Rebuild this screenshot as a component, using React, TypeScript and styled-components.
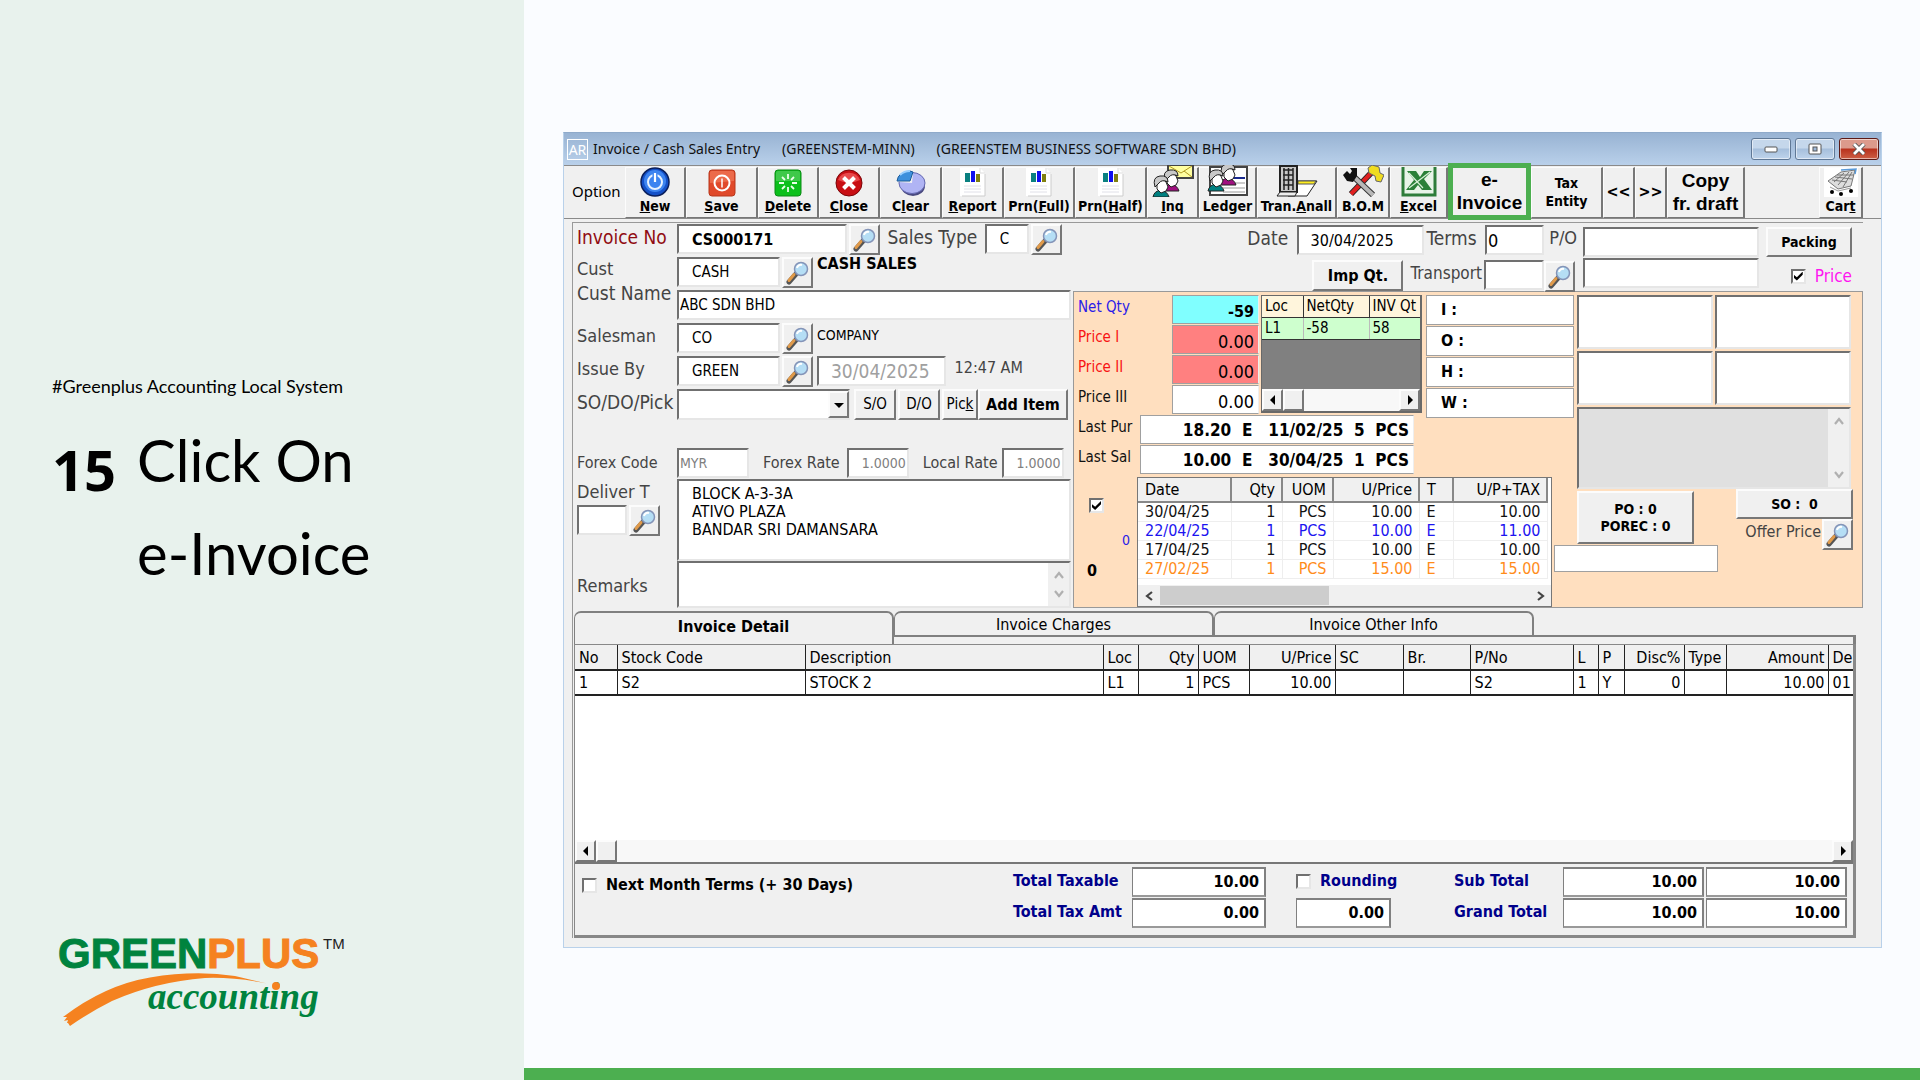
import React from "react";
import styled, { createGlobalStyle, css } from "styled-components";

const ui = `"DejaVu Sans Condensed", "DejaVu Sans", "Noto Sans", sans-serif`;

const GlobalStyle = createGlobalStyle`
  *, *::before, *::after { box-sizing: border-box; }
  body { margin: 0; background: #fafcff; font-family: ${ui}; font-size: 16px; color: #000; }
  input, button, select, textarea { font-family: inherit; color: inherit; margin: 0; border-radius: 0; }
`;

/* ---------- shared pieces ---------- */
const sunken = css`
  border: 2px solid;
  border-color: #707070 #e6e6e6 #e6e6e6 #707070;
`;
const raised = css`
  background: #f0f0f0;
  border: 2px solid;
  border-color: #fcfcfc #777 #777 #fcfcfc;
`;

const Page = styled.div`
  display: flex;
  min-height: 100vh;
`;

const Side = styled.aside`
  flex: 0 0 524px;
  background: #e8f2ed;
  display: flex;
  flex-direction: column;
  padding: 372px 30px 40px 52px;
`;
const Tag = styled.p`
  margin: 0;
  font: 18px/28px Lato, sans-serif;
`;
const Step = styled.div`
  display: flex;
  align-items: flex-start;
  gap: 21px;
  margin-top: 13px;
`;
const StepNo = styled.span`
  font: bold 56px/112px "Open Sans", sans-serif;
`;
const StepTitle = styled.h1`
  margin: 0;
  font: 400 58px/93px Lato, sans-serif;
`;
const LogoBox = styled.div`
  margin: auto 0 0 -22px;
  line-height: 0;
`;

const Main = styled.main`
  flex: 1;
  min-width: 0;
  border-bottom: 12px solid #4caf50;
  padding: 132px 38px 60px 39px;
`;

const Window = styled.section`
  background: #f0f0f0;
  border: 1px solid #b9d1ea;
  border-top: 1px solid #8faaca;
  padding-bottom: 9px;
`;
const TitleBar = styled.header`
  display: flex;
  align-items: center;
  height: 32px;
  padding: 0 2px 0 3px;
  background: linear-gradient(#98b3d3, #b9d0ea);
  font: 14px/30px "Noto Sans", sans-serif;
  color: #111;
  white-space: pre;
`;
const AppBadge = styled.span`
  width: 21px;
  height: 21px;
  margin-right: 5px;
  border: 1px solid #fff;
  color: #fff;
  line-height: 19px;
  text-align: center;
`;
const WinButtons = styled.div`
  display: flex;
  gap: 4px;
  margin-left: auto;
`;
const WinButton = styled.button<{ $danger?: boolean }>`
  width: 40px;
  height: 22px;
  padding: 0;
  display: grid;
  place-items: center;
  border: 1px solid ${p => (p.$danger ? "#5c1a16" : "#5f7896")};
  border-radius: 3px;
  box-shadow: inset 0 0 0 1px #ffffff88;
  background: ${p => (p.$danger ? "linear-gradient(#dc9a8c 45%, #b8311d 50%, #cd5f45)" : "linear-gradient(#c5d7eb 45%, #a6bfdc 50%, #bfd4ec)")};
`;

const Toolbar = styled.nav`
  display: flex;
  height: 54px;
  padding: 1px 0 0 2px;
  border-top: 1px solid #8a8a8a;
  border-bottom: 1px solid #8a8a8a;
`;
const OptionLabel = styled.span`
  width: 59px;
  padding-left: 6px;
  font: 15px/48px "Noto Sans", sans-serif;
`;
const Tool = styled.button<{ $w: number }>`
  ${raised}
  width: ${p => p.$w}px;
  padding: 0 0 2px;
  border-width: 1px 2px 1px 1px;
  display: flex;
  flex-direction: column;
  align-items: center;
  justify-content: flex-end;
  font-weight: bold;
  font-size: 14px;
  line-height: 18px;
  white-space: nowrap;
  svg { display: block; flex: none; }
`;
const TextTool = styled(Tool)<{ $big?: boolean }>`
  justify-content: center;
  white-space: pre;
  ${p => p.$big && css`
    font-family: "Liberation Sans", sans-serif;
    font-size: 19px;
    line-height: 23px;
  `}
`;
const StepTool = styled(TextTool)`
  font-size: 16px;
`;
const MarkedTool = styled(TextTool)`
  border: 5px solid #4caf50;
  margin: -4px 0 -2px;
`;
const Spacer = styled.span<{ $w?: number }>`
  flex: ${p => (p.$w ? `0 0 ${p.$w}px` : "1")};
`;

const Body = styled.div`
  margin: 3px 18px 0 8px;
  border-left: 1px solid #999;
`;
const Upper = styled.div`
  display: flex;
  border-top: 1px solid #999;
`;

/* ---------- left form ---------- */
const Form = styled.div`
  flex: 0 0 500px;
  display: grid;
  grid-template-columns: 100px 1fr;
  grid-template-rows: 33px 33px 33px 33px 33px 59px 31px 82px 47px;
  padding: 1px 0 0 4px;
`;
const Label = styled.label<{ $color?: string; $size?: number; $lh?: number }>`
  display: block;
  color: ${p => p.$color ?? "#444"};
  font-size: ${p => p.$size ?? 18}px;
  line-height: ${p => p.$lh ?? 26}px;
  white-space: nowrap;
`;
const LabelPair = styled.div`
  grid-row: span 2;
  ${Label} { line-height: 24px; }
`;
const LowLabel = styled.div`
  padding-top: 12px;
`;
const Line = styled.div<{ $gap?: number }>`
  display: flex;
  align-items: flex-start;
  gap: ${p => p.$gap ?? 2}px;
`;
const Field = styled.input<{ $w?: number; $size?: number; $pad?: number; $bold?: boolean; $right?: boolean; $color?: string }>`
  ${sunken}
  width: ${p => (p.$w ? p.$w + "px" : "100%")};
  height: 30px;
  padding: 0 ${p => p.$pad ?? 1}px;
  background: #fff;
  color: ${p => p.$color ?? "#000"};
  font-size: ${p => p.$size ?? 16}px;
  font-weight: ${p => (p.$bold ? "bold" : "normal")};
  text-align: ${p => (p.$right ? "right" : "left")};
`;
const Area = styled.textarea`
  ${sunken}
  display: block;
  width: 394px;
  height: 100%;
  padding: 4px 13px;
  resize: none;
  font-size: 16px;
  line-height: 18px;
`;
const ScrollArea = styled.div<{ $bg?: string; $w?: number; $h?: number }>`
  ${sunken}
  display: flex;
  width: ${p => (p.$w ? p.$w + "px" : "auto")};
  height: ${p => (p.$h ? p.$h + "px" : "auto")};
  background: ${p => p.$bg ?? "#fff"};
  textarea {
    flex: 1;
    min-width: 0;
    border: 0;
    background: transparent;
    resize: none;
  }
`;
const ScrollRail = styled.div`
  width: 21px;
  display: flex;
  flex-direction: column;
  justify-content: space-between;
  align-items: center;
  padding: 7px 0;
  background: #f0f0f0;
`;
const Lookup = styled.button`
  ${raised}
  flex: none;
  width: 31px;
  height: 31px;
  padding: 0;
  svg { display: block; margin: 1px 0 0 2px; }
`;
const Info = styled.span<{ $bold?: boolean; $size?: number; $color?: string }>`
  padding-left: 2px;
  font-weight: ${p => (p.$bold ? "bold" : "normal")};
  font-size: ${p => p.$size ?? 15}px;
  line-height: ${p => (p.$bold ? 14 : 24)}px;
  color: ${p => p.$color ?? "#000"};
`;
const Combo = styled.div`
  position: relative;
  width: 173px;
  select {
    ${sunken}
    width: 100%;
    height: 31px;
    appearance: none;
    background: #fff;
  }
  span {
    ${raised}
    position: absolute;
    top: 2px;
    right: 1px;
    width: 21px;
    height: 27px;
    display: grid;
    place-items: center;
    pointer-events: none;
  }
`;
const Push = styled.button<{ $w: number; $bold?: boolean; $h?: number; $size?: number }>`
  ${raised}
  width: ${p => p.$w}px;
  height: ${p => p.$h ?? 31}px;
  padding: 0;
  font-size: ${p => p.$size ?? 15}px;
  font-weight: ${p => (p.$bold ? "bold" : "normal")};
  line-height: 17px;
  white-space: pre;
`;

/* ---------- right header ---------- */
const Right = styled.div`
  flex: 1;
  min-width: 0;
`;
const Head = styled.div`
  display: flex;
  justify-content: flex-end;
  height: 68px;
  padding-right: 11px;
`;
const HeadCol = styled.div<{ $gap?: number; $top?: number; $start?: boolean; $w?: number }>`
  display: flex;
  flex-direction: column;
  align-items: ${p => (p.$start ? "flex-start" : "flex-end")};
  width: ${p => (p.$w ? p.$w + "px" : "auto")};
  gap: ${p => p.$gap ?? 2}px;
  padding-top: ${p => p.$top ?? 2}px;
`;
const Check = styled.input.attrs({ type: "checkbox" })`
  ${sunken}
  appearance: none;
  flex: none;
  width: 15px;
  height: 15px;
  background: #fff;
  display: grid;
  place-items: center;
  &:checked::before {
    content: "";
    width: 9px;
    height: 9px;
    background: #000;
    clip-path: polygon(0 35%, 35% 65%, 100% 0, 100% 35%, 35% 100%, 0 70%);
  }
`;
const CheckLabel = styled.label<{ $color?: string; $gap?: number; $bold?: boolean; $size?: number }>`
  display: flex;
  align-items: center;
  gap: ${p => p.$gap ?? 9}px;
  color: ${p => p.$color ?? "#000"};
  font-weight: ${p => (p.$bold ? "bold" : "normal")};
  font-size: ${p => p.$size ?? 16}px;
  line-height: 24px;
  white-space: nowrap;
`;

/* ---------- stock panel ---------- */
const Stock = styled.div`
  display: grid;
  grid-template-columns: 348px 132px 21px 1fr;
  grid-template-rows: 122px 60px 68px 62px;
  background: #ffdfbf;
  border: 1px solid #999;
  height: 317px;
  padding-top: 3px;
`;
const Prices = styled.div`
  grid-area: 1 / 1 / 3 / 2;
  display: grid;
  grid-template-columns: 181px 163px;
  grid-template-rows: 120px 60px;
  padding-left: 4px;
`;
const PriceRow = styled.div`
  display: flex;
  justify-content: space-between;
  height: 30px;
  ${Label} { line-height: 24px; font-size: 15px; }
`;
const Amount = styled.input<{ $w?: number; $bg?: string; $bold?: boolean; $size?: number }>`
  width: ${p => p.$w ?? 87}px;
  height: 29px;
  padding: 3px 4px 0;
  border: 1px solid #a0a0a0;
  border-right-color: #eee;
  background: ${p => p.$bg ?? "#fff"};
  font-size: ${p => p.$size ?? 18}px;
  font-weight: ${p => (p.$bold ? "bold" : "normal")};
  text-align: right;
`;
const LastRow = styled(PriceRow)`
  width: 336px;
  ${Amount} { padding-top: 0; }
`;
const LocGrid = styled.div`
  display: flex;
  flex-direction: column;
  margin: 0 0 0 2px;
  height: 118px;
  border: 2px solid #696969;
  border-width: 1px 2px 2px 1px;
  background: #808080;
  table {
    width: 100%;
    table-layout: fixed;
    border-collapse: collapse;
    font-size: 15px;
    line-height: 21px;
  }
  th, td {
    padding: 0 0 0 3px;
    border-right: 1px solid #333;
    border-bottom: 1px solid #333;
    font-weight: normal;
    text-align: left;
    white-space: nowrap;
  }
  th { background: #fff5dc; }
  td { background: #ceffce; border-right-color: #bbb; }
  th:last-child, td:last-child { border-right: 0; }
`;
const OldScroll = styled.div`
  display: flex;
  height: 22px;
  margin-top: auto;
  background: #f8f8f8;
`;
const ScrollKey = styled.button`
  ${raised}
  width: 21px;
  padding: 0;
  display: grid;
  place-items: center;
`;
const Dims = styled.div`
  grid-area: 1 / 2 / 2 / 4;
  margin: 0 1px 0 4px;
  display: flex;
  flex-direction: column;
  gap: 1px;
`;
const Dim = styled.label`
  flex: none;
  display: flex;
  height: 30px;
  padding-left: 14px;
  border: 1px solid #a0a0a0;
  background: #fff;
  font-weight: bold;
  font-size: 16px;
  line-height: 28px;
  input { flex: 1; min-width: 0; border: 0; }
`;
const Flags = styled.div`
  grid-area: 3 / 1 / 5 / 2;
  width: 64px;
  padding: 21px 0 0 15px;
  display: flex;
  flex-direction: column;
  output { line-height: 20px; }
`;
const SmallZero = styled.output`
  margin: 17px 8px 0 0;
  align-self: flex-end;
  font-size: 14px;
  color: #2b1ce8;
`;
const BoldZero = styled.output`
  margin-top: 11px;
  margin-left: -2px;
  font-weight: bold;
  font-size: 16px;
`;
const History = styled.div`
  grid-area: 3 / 1 / 5 / 3;
  margin: 0 2px 0 63px;
  height: 130px;
  border: 1px solid #777;
  background: #fff;
  display: flex;
  flex-direction: column;
  table {
    width: 100%;
    table-layout: fixed;
    border-collapse: collapse;
    line-height: 18px;
  }
  th {
    height: 24px;
    background: #f0f0f0;
    border-right: 2px solid #888;
    border-bottom: 2px solid #888;
    font-weight: normal;
  }
  td { border: 1px solid #eee; border-left: 0; border-top: 0; }
  th, td { padding: 0 6px 0 7px; text-align: right; white-space: nowrap; }
  th:first-child, td:first-child, th:nth-child(5), td:nth-child(5) { text-align: left; }
`;
const FlatScroll = styled.div`
  display: flex;
  align-items: center;
  gap: 6px;
  height: 21px;
  margin-top: auto;
  padding: 0 5px 0 6px;
  background: #f0f0f0;
  i { width: 169px; height: 19px; background: #cdcdcd; }
  svg:last-child { margin-left: auto; }
`;
const Notes = styled.div`
  grid-area: 1 / 4 / 5 / 5;
  margin: 0 11px 0 2px;
  display: grid;
  grid-template-columns: 1fr 1fr;
  grid-template-rows: 54px 54px 82px 66px;
  gap: 2px;
  height: 262px;
  > ${ScrollArea} { grid-column: 1 / 3; }
`;
const NoteBox = styled.textarea`
  ${sunken}
  width: 100%;
  height: 100%;
  resize: none;
`;
const Orders = styled.div`
  grid-column: 1 / 3;
  display: flex;
  justify-content: space-between;
  align-items: flex-start;
`;
const Offer = styled.div`
  display: flex;
  flex-direction: column;
  align-items: flex-end;
  margin: -2px -2px 0 0;
`;
const Extra = styled.div`
  grid-area: 4 / 3 / 5 / 5;
  input {
    width: 164px;
    height: 27px;
    border: 1px solid #a0a0a0;
    background: #fff;
  }
`;

/* ---------- detail ---------- */
const Tabs = styled.div`
  display: flex;
  height: 33px;
  margin: 3px 0 0 1px;
`;
const Tab = styled.button<{ $on?: boolean }>`
  flex: 0 0 320px;
  height: ${p => (p.$on ? 33 : 26)}px;
  padding: 0 0 ${p => (p.$on ? 5 : 0)}px;
  border: 2px solid #808080;
  border-bottom-width: ${p => (p.$on ? 0 : 2)}px;
  border-left-width: 1px;
  border-radius: 7px 7px 0 0;
  background: #f0f0f0;
  font-size: 16px;
  font-weight: ${p => (p.$on ? "bold" : "normal")};
`;
const TabRest = styled.span`
  flex: 1;
  margin: 24px 7px 0 0;
  border-top: 2px solid #808080;
  border-right: 3px solid #808080;
`;
const Sheet = styled.div`
  margin: 0 7px 0 1px;
  border: 3px solid #888;
  border-width: 1px 3px 3px 1px;
`;
const GridBox = styled.div`
  display: flex;
  flex-direction: column;
  height: 219px;
  background: #fff;
  border-bottom: 2px solid #777;
`;
const Detail = styled.table`
  width: 100%;
  table-layout: fixed;
  border-collapse: collapse;
  th, td {
    height: 25px;
    padding: 1px 3px 0 4px;
    border-right: 1px solid #222;
    border-bottom: 2px solid #222;
    font-weight: normal;
    text-align: left;
    line-height: 22px;
    white-space: nowrap;
  }
  th { background: #f0f0f0; }
  th:last-child, td:last-child { border-right: 0; padding-right: 0; }
`;
const Num = styled.td`
  && { text-align: right; }
`;
const Totals = styled.div`
  display: grid;
  grid-template-columns: 1fr 119px 134px 30px 95px 63px 109px 141px 2px 141px 6px;
  grid-template-rows: 31px 31px;
  height: 71px;
  padding-top: 3px;
  align-items: start;
`;
const TotalLabel = styled.label`
  color: #00008b;
  font-weight: bold;
  font-size: 16px;
  line-height: 28px;
`;
const Total = styled.input`
  display: block;
  width: 100%;
  height: 30px;
  padding: 0 5px 1px;
  border: 2px solid #808080;
  border-left-width: 1px;
  border-bottom-color: #999;
  background: #fff;
  font-weight: bold;
  font-size: 16px;
  text-align: right;
`;
const Cell = styled.div<{ $c: string; $pad?: string }>`
  grid-area: ${p => p.$c};
  padding: ${p => p.$pad ?? "0"};
`;

/* ---------- drawings ---------- */
const Glass = () => (
  <svg width="24" height="24" viewBox="0 0 24 24">
    <path d="M3 21 10 13" stroke="#555" strokeWidth="5" strokeLinecap="round" />
    <path d="M3 19.500 8 13.500" stroke="#e09a4a" strokeWidth="3" strokeLinecap="round" />
    <circle cx="15" cy="8" r="6.500" fill="#b5def5" stroke="#8494b8" strokeWidth="1.500" />
    <path d="M11 7a4 4 0 0 1 5-3" stroke="#fff" strokeWidth="2" fill="none" />
  </svg>
);
const Arrow = ({ dir }: { dir: "left" | "right" | "down" }) => (
  <svg width="10" height="10" viewBox="0 0 10 10">
    <path d={dir === "left" ? "M7 0v10L2 5z" : dir === "right" ? "M3 0v10l5-5z" : "M0 3h10L5 8z"} />
  </svg>
);
const Chevron = ({ dir, color = "#b0b0b0" }: { dir: "up" | "down" | "left" | "right"; color?: string }) => {
  const d = { up: "M1 8l4-5 4 5", down: "M1 2l4 5 4-5", left: "M8 1L3 5l5 4", right: "M2 1l5 4-5 4" }[dir];
  return (
    <svg width="10" height="10" viewBox="0 0 10 10">
      <path d={d} fill="none" stroke={color} strokeWidth="2.200" />
    </svg>
  );
};

const PowerIcon = () => (
  <svg width="30" height="30" viewBox="0 0 30 30">
    <circle cx="15" cy="15" r="14" fill="#1450c8" stroke="#0a1f5c" strokeWidth="1.500" />
    <circle cx="15" cy="14" r="11" fill="#3d84f0" />
    <circle cx="15" cy="15" r="7" fill="none" stroke="#e8f2ff" strokeWidth="2" />
    <path d="M15 6v9" stroke="#3d84f0" strokeWidth="5" />
    <path d="M15 6v9" stroke="#fff" strokeWidth="2.200" />
  </svg>
);
const SaveIcon = () => (
  <svg width="28" height="28" viewBox="0 0 28 28">
    <rect x="1" y="1" width="26" height="26" rx="3" fill="#e0492a" stroke="#b8381c" />
    <path d="M2 14V4q0-2 2-2h20q2 0 2 2v8z" fill="#ec6a4a" />
    <circle cx="14" cy="14" r="7.500" fill="none" stroke="#fff" strokeWidth="2" />
    <path d="M14 9.500v9" stroke="#fff" strokeWidth="1.500" />
  </svg>
);
const DeleteIcon = () => (
  <svg width="28" height="28" viewBox="0 0 28 28">
    <rect x="1" y="1" width="26" height="26" rx="3" fill="#0cc01c" stroke="#0a8a14" />
    <path d="M2 12V4q0-2 2-2h20q2 0 2 2v8z" fill="#3fc94a" />
    <path d="M14 5v5M14 18v5M5 14h5M18 14h5M8 8l3 3M17 17l3 3M20 8l-3 3M11 17l-3 3" stroke="#eaffea" strokeWidth="1.800" />
  </svg>
);
const CloseIcon = () => (
  <svg width="28" height="28" viewBox="0 0 28 28">
    <circle cx="14" cy="14" r="13" fill="#c80f14" stroke="#7a0508" />
    <path d="M3 11a12 12 0 0 1 22 0q-11 5-22 0z" fill="#e8484a" />
    <path d="M8.500 8.500l11 11M19.500 8.500l-11 11" stroke="#fff" strokeWidth="4" />
  </svg>
);
const ClearIcon = () => (
  <svg width="32" height="28" viewBox="0 0 32 28">
    <ellipse cx="18" cy="17" rx="12" ry="10" fill="#4a4a80" />
    <ellipse cx="17" cy="14" rx="13" ry="10.500" fill="#b0b4f4" stroke="#6468b0" />
    <path d="M17 14 4 13q2-6 8-9h6z" fill="#f0f0f0" />
    <path d="M2 12Q3 3 15 2l3 1-3 9z" fill="#3e90dc" stroke="#1a5a98" />
    <path d="M5 6q4-4 10-4" stroke="#9cd0ff" strokeWidth="2" fill="none" />
  </svg>
);
const ReportIcon = () => (
  <svg width="26" height="29" viewBox="0 0 26 29">
    <path d="M0 0h20l5 5v23H0z" fill="#fff" />
    <path d="M20 0v5h5" fill="none" stroke="#ddd" />
    <path d="M25 6v22H2" fill="none" stroke="#ccc" />
    <path d="M5 5h5v9H5z" fill="#0a8080" />
    <path d="M11 3h4v11h-4z" fill="#1010f0" />
    <path d="M16 6h4v8h-4z" fill="#808010" />
    <path d="M4 18h17M4 21h17M4 24h17" stroke="#e0e0e8" />
  </svg>
);
const Face = ({ x, y, coat }: { x: number; y: number; coat: string }) => (
  <g transform={`translate(${x} ${y})`} stroke="#222">
    <path d="M0 22q1-6 8-7 6 1 8 7z" fill={coat} />
    <path d="M4 6q5-4 9 1l2 5-2 4-5 2-4-4z" fill="#fff" />
    <path d="M2 12Q-1 2 7 1q8-1 8 6-6-3-9 1z" fill="#c8c8c8" />
  </g>
);
const InquiryIcon = () => (
  <svg width="42" height="32" viewBox="0 0 42 32">
    <path d="M16 0h25v13H16z" fill="#ffffa0" stroke="#444" strokeWidth="2" />
    <path d="M17 1l12 7 11-7M17 12l8-6M40 12l-8-6" stroke="#b09820" fill="none" />
    <Face x={11} y={4} coat="#a01080" />
    <Face x={1} y={10} coat="#008080" />
  </svg>
);
const LedgerIcon = () => (
  <svg width="42" height="32" viewBox="0 0 42 32">
    <path d="M3 2h37v28H3z" fill="#fff" stroke="#444" strokeWidth="2" />
    <path d="M20 13h18" stroke="#1a2a90" strokeWidth="2" />
    <path d="M20 18h18M16 23h22M16 27h22" stroke="#999" />
    <Face x={13} y={-2} coat="#a01080" />
    <Face x={1} y={4} coat="#008080" />
  </svg>
);
const BuildingIcon = () => (
  <svg width="42" height="32" viewBox="0 0 42 32">
    <path d="M18 16h23L31 31H12z" fill="#fff" stroke="#222" />
    <path d="M22 16h18l-2 3H22z" fill="#ffee20" stroke="#555" />
    <path d="M4 1h17v26H4z" fill="#c8c8c8" stroke="#222" strokeWidth="2" />
    <path d="M7 5h10M7 10h10M7 15h10M7 20h10M8 3v22M12.500 3v22M17 3v22" stroke="#222" strokeWidth="1.500" />
    <path d="M4 27h17l-2 4H1z" fill="#eee" stroke="#222" />
  </svg>
);
const ToolsIcon = () => (
  <svg width="42" height="32" viewBox="0 0 42 32">
    <path d="M9 29 30 7" stroke="#222" strokeWidth="6" />
    <path d="M9 29 30 7" stroke="#e02020" strokeWidth="4" />
    <path d="M11 11 31 30" stroke="#333" strokeWidth="6" />
    <path d="M11 11 31 30" stroke="#b8b8b8" strokeWidth="4" />
    <path d="M1 10 5 6l3 3 2-3-2-3h7v8l-4 6-6-1z" fill="#111" />
    <path d="M26 3l4-3 7 2 1 6 4 2-3 7-5-1-1-5-6-3z" fill="#f0dc20" stroke="#666" />
  </svg>
);
const ExcelIcon = () => (
  <svg width="38" height="30" viewBox="0 0 38 30">
    <path d="M2 0h34v28H2z" fill="#e8f4e8" />
    <path d="M3 0v28h32V0" fill="none" stroke="#2e7d3a" strokeWidth="3" />
    <path d="M7 4h9l4 6 4-6h8l-8 8 8 11H22l-4-5-4 5H6l8-10z" fill="#2a8038" />
    <path d="M9 6l14 15M30 5 9 21" stroke="#d8f0d8" strokeWidth="1.200" />
  </svg>
);
const CartIcon = () => (
  <svg width="34" height="29" viewBox="0 0 34 29">
    <path d="M0 0h34v29H0z" fill="#fff" />
    <path d="M17 4 31 2l-4 16-13 3L4 13z" fill="#ddd" stroke="#777" />
    <path d="M8 12l15 2M11 9l17 2M13 7l17 0M10 14l10-9M14 17 25 4M19 19l9-15" stroke="#777" fill="none" />
    <path d="M17 2 32 1l-1 5" stroke="#5a9ad8" strokeWidth="1.500" fill="none" />
    <path d="M6 19l8 4 13-3" stroke="#999" fill="none" />
    <circle cx="8" cy="24" r="2" /><circle cx="17" cy="26" r="2" /><circle cx="27" cy="23" r="2" />
  </svg>
);

const Logo = () => (
  <svg width="340" height="130" viewBox="0 0 340 130" role="img" aria-label="Greenplus accounting">
    <text x="28" y="58" fontFamily="Liberation Sans, Arial, sans-serif" fontWeight="bold" fontSize="42" fill="#00833e" stroke="#00833e">
      GREEN<tspan fill="#f58220" stroke="#f58220">PLUS</tspan>
    </text>
    <text x="293" y="39" fontFamily="Liberation Sans, Arial, sans-serif" fontSize="15" fill="#222">TM</text>
    <path
      d="M33 107 Q75 75 120 67.500 Q165 60 205 66 L237 73.500 Q205 67 175 68 Q125 72 82 91 Q60 102 40 116 L38 113 37 113 38 110 34 111 37 107z"
      fill="#f58220"
    />
    <text x="118" y="99" fontFamily="Liberation Serif, Times New Roman, serif" fontWeight="bold" fontStyle="italic" fontSize="37" fill="#00833e">
      accounting
    </text>
    <circle cx="246" cy="76" r="4" fill="#f58220" />
  </svg>
);

/* ---------- data ---------- */
const history = [
  { date: "30/04/25", price: "10.00", tax: "10.00", color: "#111" },
  { date: "22/04/25", price: "10.00", tax: "11.00", color: "#1c14f0" },
  { date: "17/04/25", price: "10.00", tax: "10.00", color: "#111" },
  { date: "27/02/25", price: "15.00", tax: "15.00", color: "#ff8c1a" },
];

const columns: { title: string; w?: number; value: string; num?: boolean }[] = [
  { title: "No", w: 42, value: "1" },
  { title: "Stock Code", w: 188, value: "S2" },
  { title: "Description", value: "STOCK 2" },
  { title: "Loc", w: 35, value: "L1" },
  { title: "Qty", w: 60, value: "1", num: true },
  { title: "UOM", w: 51, value: "PCS" },
  { title: "U/Price", w: 86, value: "10.00", num: true },
  { title: "SC", w: 68, value: "" },
  { title: "Br.", w: 67, value: "" },
  { title: "P/No", w: 103, value: "S2" },
  { title: "L", w: 25, value: "1" },
  { title: "P", w: 26, value: "Y" },
  { title: "Disc%", w: 60, value: "0", num: true },
  { title: "Type", w: 42, value: "" },
  { title: "Amount", w: 102, value: "10.00", num: true },
  { title: "De", w: 25, value: "01" },
];

const Search = ({ name }: { name: string }) => (
  <Lookup aria-label={name}><Glass /></Lookup>
);

export default function App() {
  return (
    <Page>
      <GlobalStyle />
      <Side>
        <Tag>#Greenplus Accounting Local System</Tag>
        <Step>
          <StepNo>15</StepNo>
          <StepTitle>Click On<br />e-Invoice</StepTitle>
        </Step>
        <LogoBox><Logo /></LogoBox>
      </Side>

      <Main>
        <Window>
          <TitleBar>
            <AppBadge>AR</AppBadge>
            {"Invoice / Cash Sales Entry      (GREENSTEM-MINN)      (GREENSTEM BUSINESS SOFTWARE SDN BHD)"}
            <WinButtons>
              <WinButton aria-label="Minimize">
                <svg width="14" height="7" viewBox="0 0 14 7"><rect x="1" y="1" width="12" height="5" rx="1" fill="#fff" stroke="#555" /></svg>
              </WinButton>
              <WinButton aria-label="Maximize">
                <svg width="14" height="12" viewBox="0 0 14 12"><rect x="1" y="1" width="12" height="10" rx="1" fill="#fff" stroke="#555" /><rect x="5" y="4" width="4" height="4" fill="#9db8d8" stroke="#555" /></svg>
              </WinButton>
              <WinButton $danger aria-label="Close window">
                <svg width="14" height="12" viewBox="0 0 14 12"><path d="M2 1l10 10M12 1L2 11" stroke="#555" strokeWidth="4.500" /><path d="M2 1l10 10M12 1L2 11" stroke="#fff" strokeWidth="2.800" /></svg>
              </WinButton>
            </WinButtons>
          </TitleBar>

          <Toolbar>
            <OptionLabel>Option</OptionLabel>
            <Tool $w={61}><PowerIcon /><span><u>N</u>ew</span></Tool>
            <Tool $w={72}><SaveIcon /><span><u>S</u>ave</span></Tool>
            <Tool $w={61}><DeleteIcon /><span><u>D</u>elete</span></Tool>
            <Tool $w={61}><CloseIcon /><span><u>C</u>lose</span></Tool>
            <Tool $w={62}><ClearIcon /><span>C<u>l</u>ear</span></Tool>
            <Tool $w={62}><ReportIcon /><span><u>R</u>eport</span></Tool>
            <Tool $w={71}><ReportIcon /><span>Prn(<u>F</u>ull)</span></Tool>
            <Tool $w={72}><ReportIcon /><span>Prn(<u>H</u>alf)</span></Tool>
            <Tool $w={52}><InquiryIcon /><span><u>I</u>nq</span></Tool>
            <Tool $w={58}><LedgerIcon /><span>Ledger</span></Tool>
            <Tool $w={80}><BuildingIcon /><span>Tran.<u>A</u>nall</span></Tool>
            <Tool $w={53}><ToolsIcon /><span>B.O.M</span></Tool>
            <Tool $w={58}><ExcelIcon /><span><u>E</u>xcel</span></Tool>
            <MarkedTool $w={83} $big>{"e-\nInvoice"}</MarkedTool>
            <TextTool $w={72}>{"Tax\nEntity"}</TextTool>
            <StepTool $w={32}>{"<<"}</StepTool>
            <StepTool $w={32}>{">>"}</StepTool>
            <TextTool $w={78} $big>{"Copy\nfr. draft"}</TextTool>
            <Spacer />
            <Tool $w={44}><CartIcon /><span>Car<u>t</u></span></Tool>
            <Spacer $w={18} />
          </Toolbar>

          <Body>
            <Upper>
              <Form>
                <Label htmlFor="inv" $color="#900c12" $size={19}>Invoice No</Label>
                <Line>
                  <Field id="inv" $w={170} $pad={13} $bold defaultValue="CS000171" />
                  <Search name="Find invoice" />
                  <Label htmlFor="stype" $size={19}>&nbsp;Sales Type&nbsp;</Label>
                  <Field id="stype" $w={44} $pad={13} $size={15} defaultValue="C" />
                  <Search name="Find sales type" />
                </Line>

                <LabelPair>
                  <Label htmlFor="cust">Cust</Label>
                  <Label htmlFor="cname" $size={19}>Cust Name</Label>
                </LabelPair>
                <Line>
                  <Field id="cust" $w={103} $pad={13} $size={15} defaultValue="CASH" />
                  <Search name="Find customer" />
                  <Info $bold $size={16}>CASH SALES</Info>
                </Line>
                <Line><Field id="cname" $w={394} $size={15} defaultValue="ABC SDN BHD" /></Line>

                <Label htmlFor="sman">Salesman</Label>
                <Line>
                  <Field id="sman" $w={103} $pad={13} $size={15} defaultValue="CO" />
                  <Search name="Find salesman" />
                  <Info $size={14}>COMPANY</Info>
                </Line>

                <Label htmlFor="issue">Issue By</Label>
                <Line>
                  <Field id="issue" $w={103} $pad={13} $size={15} defaultValue="GREEN" />
                  <Search name="Find issuer" />
                  <span />
                  <Field aria-label="Issue date" $w={129} $size={19} $pad={12} $color="#a0a0a0" defaultValue="30/04/2025" />
                  <Info $size={16} $color="#444">&nbsp;12:47 AM</Info>
                </Line>

                <Label htmlFor="sodo" $size={19}>SO/DO/Pick</Label>
                <Line>
                  <Combo>
                    <select id="sodo"><option /></select>
                    <span><Arrow dir="down" /></span>
                  </Combo>
                  <span />
                  <Push $w={42}>S/O</Push>
                  <Push $w={42}>D/O</Push>
                  <Line $gap={0}>
                    <Push $w={36}>Pic<u>k</u></Push>
                    <Push $w={90} $bold $size={16}>Add Item</Push>
                  </Line>
                </Line>

                <Label htmlFor="fcode" $size={16} $lh={30}>Forex Code</Label>
                <Line $gap={14}>
                  <Field id="fcode" $w={72} $size={14} $color="#808080" defaultValue="MYR" />
                  <Line $gap={7}>
                    <Label htmlFor="frate" $size={16} $lh={30}>Forex Rate</Label>
                    <Field id="frate" $w={62} $size={14} $right $color="#808080" defaultValue="1.0000" />
                  </Line>
                  <Line $gap={4}>
                    <Label htmlFor="lrate" $size={16} $lh={30}>Local Rate</Label>
                    <Field id="lrate" $w={62} $size={14} $right $color="#808080" defaultValue="1.0000" />
                  </Line>
                </Line>

                <div>
                  <Label htmlFor="deliver">Deliver T</Label>
                  <Line>
                    <Field id="deliver" $w={50} />
                    <Search name="Find delivery address" />
                  </Line>
                </div>
                <Area aria-label="Delivery address" defaultValue={"BLOCK A-3-3A\nATIVO PLAZA\nBANDAR SRI DAMANSARA"} />

                <LowLabel><Label htmlFor="remarks">Remarks</Label></LowLabel>
                <Line>
                  <ScrollArea $w={394} $h={47}>
                    <textarea id="remarks" />
                    <ScrollRail><Chevron dir="up" /><Chevron dir="down" /></ScrollRail>
                  </ScrollArea>
                </Line>
              </Form>

              <Right>
                <Head>
                  <HeadCol $gap={5}>
                    <Line $gap={3}>
                      <Label htmlFor="date" $size={19}>Date&nbsp;</Label>
                      <Field id="date" $w={127} $pad={12} defaultValue="30/04/2025" />
                      <Label htmlFor="terms" $size={19}>Terms&nbsp;</Label>
                      <Field id="terms" $w={59} $size={18} defaultValue="0" />
                    </Line>
                    <Line>
                      <Push $w={91} $bold $size={16}>Imp Qt.</Push>
                      <Spacer $w={3} />
                      <Label htmlFor="transport" $size={17}>Transport</Label>
                      <Field id="transport" $w={60} />
                    </Line>
                  </HeadCol>
                  <HeadCol $gap={10} $start $w={39}>
                    <Label htmlFor="po">&nbsp;P/O</Label>
                    <Search name="Find transport" />
                  </HeadCol>
                  <HeadCol $gap={1} $top={4}>
                    <Field id="po" $w={176} />
                    <Field aria-label="P/O line 2" $w={176} />
                  </HeadCol>
                  <HeadCol $top={4} $gap={7} $w={93}>
                    <Push $w={86} $bold $size={14} $h={30}>Packing</Push>
                    <CheckLabel $color="#ff14f0" $size={17}><Check defaultChecked />Price</CheckLabel>
                  </HeadCol>
                </Head>

                <Stock>
                  <Prices>
                    <div>
                      <PriceRow><Label htmlFor="nq" $color="#2b1ce8">Net Qty</Label><Amount id="nq" $bg="#80ffff" $bold $size={16} defaultValue="-59" /></PriceRow>
                      <PriceRow><Label htmlFor="p1" $color="#f81414">Price I</Label><Amount id="p1" $bg="#ff8080" defaultValue="0.00" /></PriceRow>
                      <PriceRow><Label htmlFor="p2" $color="#f81414">Price II</Label><Amount id="p2" $bg="#ff8080" defaultValue="0.00" /></PriceRow>
                      <PriceRow><Label htmlFor="p3" $color="#111">Price III</Label><Amount id="p3" defaultValue="0.00" /></PriceRow>
                    </div>
                    <LocGrid>
                      <table>
                        <colgroup><col style={{ width: 41 }} /><col style={{ width: 66 }} /><col /></colgroup>
                        <thead><tr><th>Loc</th><th>NetQty</th><th>INV Qt</th></tr></thead>
                        <tbody><tr><td>L1</td><td>-58</td><td>58</td></tr></tbody>
                      </table>
                      <OldScroll>
                        <ScrollKey aria-label="Scroll left"><Arrow dir="left" /></ScrollKey>
                        <ScrollKey aria-label="Scroll thumb" />
                        <Spacer />
                        <ScrollKey aria-label="Scroll right"><Arrow dir="right" /></ScrollKey>
                      </OldScroll>
                    </LocGrid>
                    <div>
                      <LastRow><Label htmlFor="lp" $color="#111">Last Pur</Label><Amount id="lp" $w={274} $bold $size={17} defaultValue="18.20  E   11/02/25  5  PCS" /></LastRow>
                      <LastRow><Label htmlFor="ls" $color="#111">Last Sal</Label><Amount id="ls" $w={274} $bold $size={17} defaultValue="10.00  E   30/04/25  1  PCS" /></LastRow>
                    </div>
                  </Prices>

                  <Dims>
                    {["I", "O", "H", "W"].map(d => <Dim key={d}>{d} :<input /></Dim>)}
                  </Dims>

                  <Flags>
                    <Check defaultChecked aria-label="Show history" />
                    <SmallZero>0</SmallZero>
                    <BoldZero>0</BoldZero>
                  </Flags>

                  <History>
                    <table>
                      <colgroup>
                        {[93, 51, 51, 86, 34, 94].map((w, i) => <col key={i} style={{ width: w }} />)}
                        <col />
                      </colgroup>
                      <thead>
                        <tr><th>Date</th><th>Qty</th><th>UOM</th><th>U/Price</th><th>T</th><th>U/P+TAX</th></tr>
                      </thead>
                      <tbody>
                        {history.map(h => (
                          <tr key={h.date} style={{ color: h.color }}>
                            <td>{h.date}</td><td>1</td><td>PCS</td><td>{h.price}</td><td>E</td><td>{h.tax}</td>
                          </tr>
                        ))}
                      </tbody>
                    </table>
                    <FlatScroll>
                      <Chevron dir="left" color="#444" /><i /><Chevron dir="right" color="#444" />
                    </FlatScroll>
                  </History>

                  <Notes>
                    <NoteBox aria-label="Note 1" /><NoteBox aria-label="Note 2" />
                    <NoteBox aria-label="Note 3" /><NoteBox aria-label="Note 4" />
                    <ScrollArea $bg="#e0e0e0">
                      <textarea aria-label="Stock remarks" />
                      <ScrollRail><Chevron dir="up" /><Chevron dir="down" /></ScrollRail>
                    </ScrollArea>
                    <Orders>
                      <Push $w={117} $h={53} $bold $size={14}>{"PO : 0\nPOREC : 0"}</Push>
                      <Offer>
                        <Push $w={117} $h={30} $bold $size={14}>SO :  0</Push>
                        <Line $gap={1}>
                          <Label as="span" $size={16}>Offer Price</Label>
                          <Search name="Find offer price" />
                        </Line>
                      </Offer>
                    </Orders>
                  </Notes>
                  <Extra><input aria-label="Offer note" /></Extra>
                </Stock>
              </Right>
            </Upper>

            <Tabs>
              <Tab $on>Invoice Detail</Tab>
              <Tab>Invoice Charges</Tab>
              <Tab>Invoice Other Info</Tab>
              <TabRest />
            </Tabs>
            <Sheet>
              <GridBox>
                <Detail>
                  <colgroup>
                    {columns.map(c => <col key={c.title} style={c.w ? { width: c.w } : undefined} />)}
                  </colgroup>
                  <thead>
                    <tr>{columns.map(c => (c.num ? <Num as="th" key={c.title}>{c.title}</Num> : <th key={c.title}>{c.title}</th>))}</tr>
                  </thead>
                  <tbody>
                    <tr>{columns.map(c => (c.num ? <Num key={c.title}>{c.value}</Num> : <td key={c.title}>{c.value}</td>))}</tr>
                  </tbody>
                </Detail>
                <OldScroll>
                  <ScrollKey aria-label="Scroll left"><Arrow dir="left" /></ScrollKey>
                  <ScrollKey aria-label="Scroll thumb" />
                  <Spacer />
                  <ScrollKey aria-label="Scroll right"><Arrow dir="right" /></ScrollKey>
                </OldScroll>
              </GridBox>
              <Totals>
                <Cell $c="1 / 1" $pad="6px 0 0 7px">
                  <CheckLabel $bold><Check />Next Month Terms (+ 30 Days)</CheckLabel>
                </Cell>
                <Cell $c="1 / 2"><TotalLabel htmlFor="tt">Total Taxable</TotalLabel></Cell>
                <Cell $c="1 / 3"><Total id="tt" defaultValue="10.00" /></Cell>
                <Cell $c="1 / 5" $pad="2px 0 0"><CheckLabel $bold $color="#00008b"><Check />Rounding</CheckLabel></Cell>
                <Cell $c="1 / 7"><TotalLabel htmlFor="st">Sub Total</TotalLabel></Cell>
                <Cell $c="1 / 8"><Total id="st" defaultValue="10.00" /></Cell>
                <Cell $c="1 / 10"><Total aria-label="Sub total, local" defaultValue="10.00" /></Cell>
                <Cell $c="2 / 2"><TotalLabel htmlFor="ta">Total Tax Amt</TotalLabel></Cell>
                <Cell $c="2 / 3"><Total id="ta" defaultValue="0.00" /></Cell>
                <Cell $c="2 / 5"><Total aria-label="Rounding amount" defaultValue="0.00" /></Cell>
                <Cell $c="2 / 7"><TotalLabel htmlFor="gt">Grand Total</TotalLabel></Cell>
                <Cell $c="2 / 8"><Total id="gt" defaultValue="10.00" /></Cell>
                <Cell $c="2 / 10"><Total aria-label="Grand total, local" defaultValue="10.00" /></Cell>
              </Totals>
            </Sheet>
          </Body>
        </Window>
      </Main>
    </Page>
  );
}
